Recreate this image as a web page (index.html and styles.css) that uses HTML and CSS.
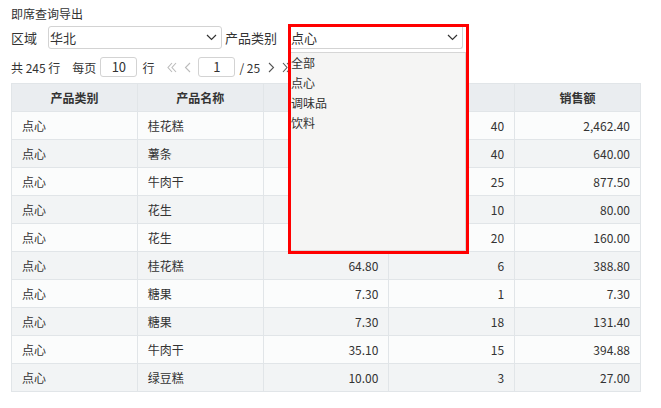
FILE: index.html
```html
<!DOCTYPE html>
<html lang="zh">
<head>
<meta charset="utf-8">
<title>即席查询导出</title>
<link rel="stylesheet" href="styles.css">
</head>
<body>
<div class="page">
  <div class="title">即席查询导出</div>
  <div class="filters">
    <span class="label">区域</span>
    <div class="select region">
      <span>华北</span>
      <svg class="chev" width="11" height="7" viewBox="0 0 11 7"><path d="M1 1l4.5 4.5L10 1" fill="none" stroke="#333" stroke-width="1.2"/></svg>
    </div>
    <span class="label cat-label">产品类别</span>
    <div class="cat-wrap">
      <div class="dropdown">
        <div class="select cat">
          <span>点心</span>
          <svg class="chev" width="11" height="7" viewBox="0 0 11 7"><path d="M1 1l4.5 4.5L10 1" fill="none" stroke="#333" stroke-width="1.2"/></svg>
        </div>
        <ul class="options">
          <li>全部</li>
          <li>点心</li>
          <li>调味品</li>
          <li>饮料</li>
        </ul>
      </div>
    </div>
  </div>
  <div class="pager">
    <span>共 245 行</span>
    <span class="per">每页</span>
    <span class="pgbox">10</span>
    <span class="unit">行</span>
    <svg class="nav first" width="10" height="11" viewBox="0 0 10 11"><path d="M5 1L1 5.5 5 10M9 1L5 5.5 9 10" fill="none" stroke="#bbb" stroke-width="1.1"/></svg>
    <svg class="nav prev" width="7" height="11" viewBox="0 0 7 11"><path d="M6 1L1.5 5.5 6 10" fill="none" stroke="#bbb" stroke-width="1.1"/></svg>
    <span class="pgbox cur">1</span>
    <span class="total">/ 25</span>
    <svg class="nav next" width="7" height="11" viewBox="0 0 7 11"><path d="M1 1l4.5 4.5L1 10" fill="none" stroke="#555" stroke-width="1.1"/></svg>
    <svg class="nav last" width="10" height="11" viewBox="0 0 10 11"><path d="M1 1l4 4.5L1 10M5 1l4 4.5L5 10" fill="none" stroke="#555" stroke-width="1.1"/></svg>
  </div>
  <table class="grid">
    <thead>
      <tr><th>产品类别</th><th>产品名称</th><th></th><th></th><th>销售额</th></tr>
    </thead>
    <tbody>
      <tr><td>点心</td><td>桂花糕</td><td class="num">61.56</td><td class="num">40</td><td class="num">2,462.40</td></tr>
      <tr><td>点心</td><td>薯条</td><td class="num">16.00</td><td class="num">40</td><td class="num">640.00</td></tr>
      <tr><td>点心</td><td>牛肉干</td><td class="num">35.10</td><td class="num">25</td><td class="num">877.50</td></tr>
      <tr><td>点心</td><td>花生</td><td class="num">8.00</td><td class="num">10</td><td class="num">80.00</td></tr>
      <tr><td>点心</td><td>花生</td><td class="num">8.00</td><td class="num">20</td><td class="num">160.00</td></tr>
      <tr><td>点心</td><td>桂花糕</td><td class="num">64.80</td><td class="num">6</td><td class="num">388.80</td></tr>
      <tr><td>点心</td><td>糖果</td><td class="num">7.30</td><td class="num">1</td><td class="num">7.30</td></tr>
      <tr><td>点心</td><td>糖果</td><td class="num">7.30</td><td class="num">18</td><td class="num">131.40</td></tr>
      <tr><td>点心</td><td>牛肉干</td><td class="num">35.10</td><td class="num">15</td><td class="num">394.88</td></tr>
      <tr><td>点心</td><td>绿豆糕</td><td class="num">10.00</td><td class="num">3</td><td class="num">27.00</td></tr>
    </tbody>
  </table>
</div>
</body>
</html>
```

FILE: styles.css
```css
* { box-sizing: border-box; }
body {
  margin: 0;
  background: #fff;
  color: #333;
  font-family: "Noto Sans CJK SC", "Noto Sans", sans-serif;
}
.page { padding: 5px 20px 0 11px; }
.title { font-size: 12px; line-height: 18px; height: 18px; }

.filters {
  display: flex;
  align-items: center;
  height: 23px;
  margin-top: 3px;
}
.label { font-size: 13px; line-height: 23px; }
.label:first-child { margin-right: 11px; }
.select {
  display: flex;
  align-items: center;
  justify-content: space-between;
  font-size: 13px;
  background: #fff;
  border: 1px solid #d3d3d3;
  border-radius: 3px;
}
.region { width: 174px; height: 23px; padding: 0 4px 0 1px; }
.cat-label { margin-left: 3px; }
.cat-wrap { position: relative; width: 181px; height: 23px; margin-left: 11px; }
.dropdown {
  position: absolute;
  left: 0;
  top: -2px;
  width: 181px;
  height: 230px;
  border: 3px solid #f00;
  background: #fff;
  z-index: 2;
}
.cat { width: 172px; height: 22px; padding: 0 4px 0 0; border-left: none; border-top: none; border-radius: 0 0 3px 0; }
.options {
  list-style: none;
  margin: 3px 0 0;
  padding: 0;
  height: 199px;
  background: #f5f5f4;
  border: 1px solid #d6d6d6;
  border-left: none;
  font-size: 12px;
  line-height: 20px;
}

.pager {
  display: flex;
  align-items: center;
  height: 20px;
  margin-top: 8px;
  font-size: 12px;
}
.per { margin-left: 12px; }
.pgbox {
  width: 37px;
  height: 20px;
  margin-left: 4px;
  border: 1px solid #d3d3d3;
  border-radius: 3px;
  text-align: center;
  font-size: 13px;
  line-height: 18px;
}
.unit { margin-left: 5px; }
.first { margin-left: 13px; }
.prev { margin-left: 7px; }
.cur { margin-left: 7px; }
.total { margin-left: 4px; }
.next { margin-left: 8px; }
.last { margin-left: 7px; }

.grid {
  width: 630px;
  margin-top: 6px;
  border-collapse: collapse;
  table-layout: fixed;
  font-size: 12px;
}
.grid th, .grid td {
  height: 28px;
  padding: 0 10px;
  border: 1px solid #e1e5e8;
  line-height: 16px;
  text-align: left;
  font-weight: normal;
}
.grid th { background: #eaedf0; text-align: center; font-weight: bold; }
.grid tbody tr:nth-child(odd) td { background: #fbfcfc; }
.grid tbody tr:nth-child(even) td { background: #f2f4f5; }
.grid td.num { text-align: right; }
```
